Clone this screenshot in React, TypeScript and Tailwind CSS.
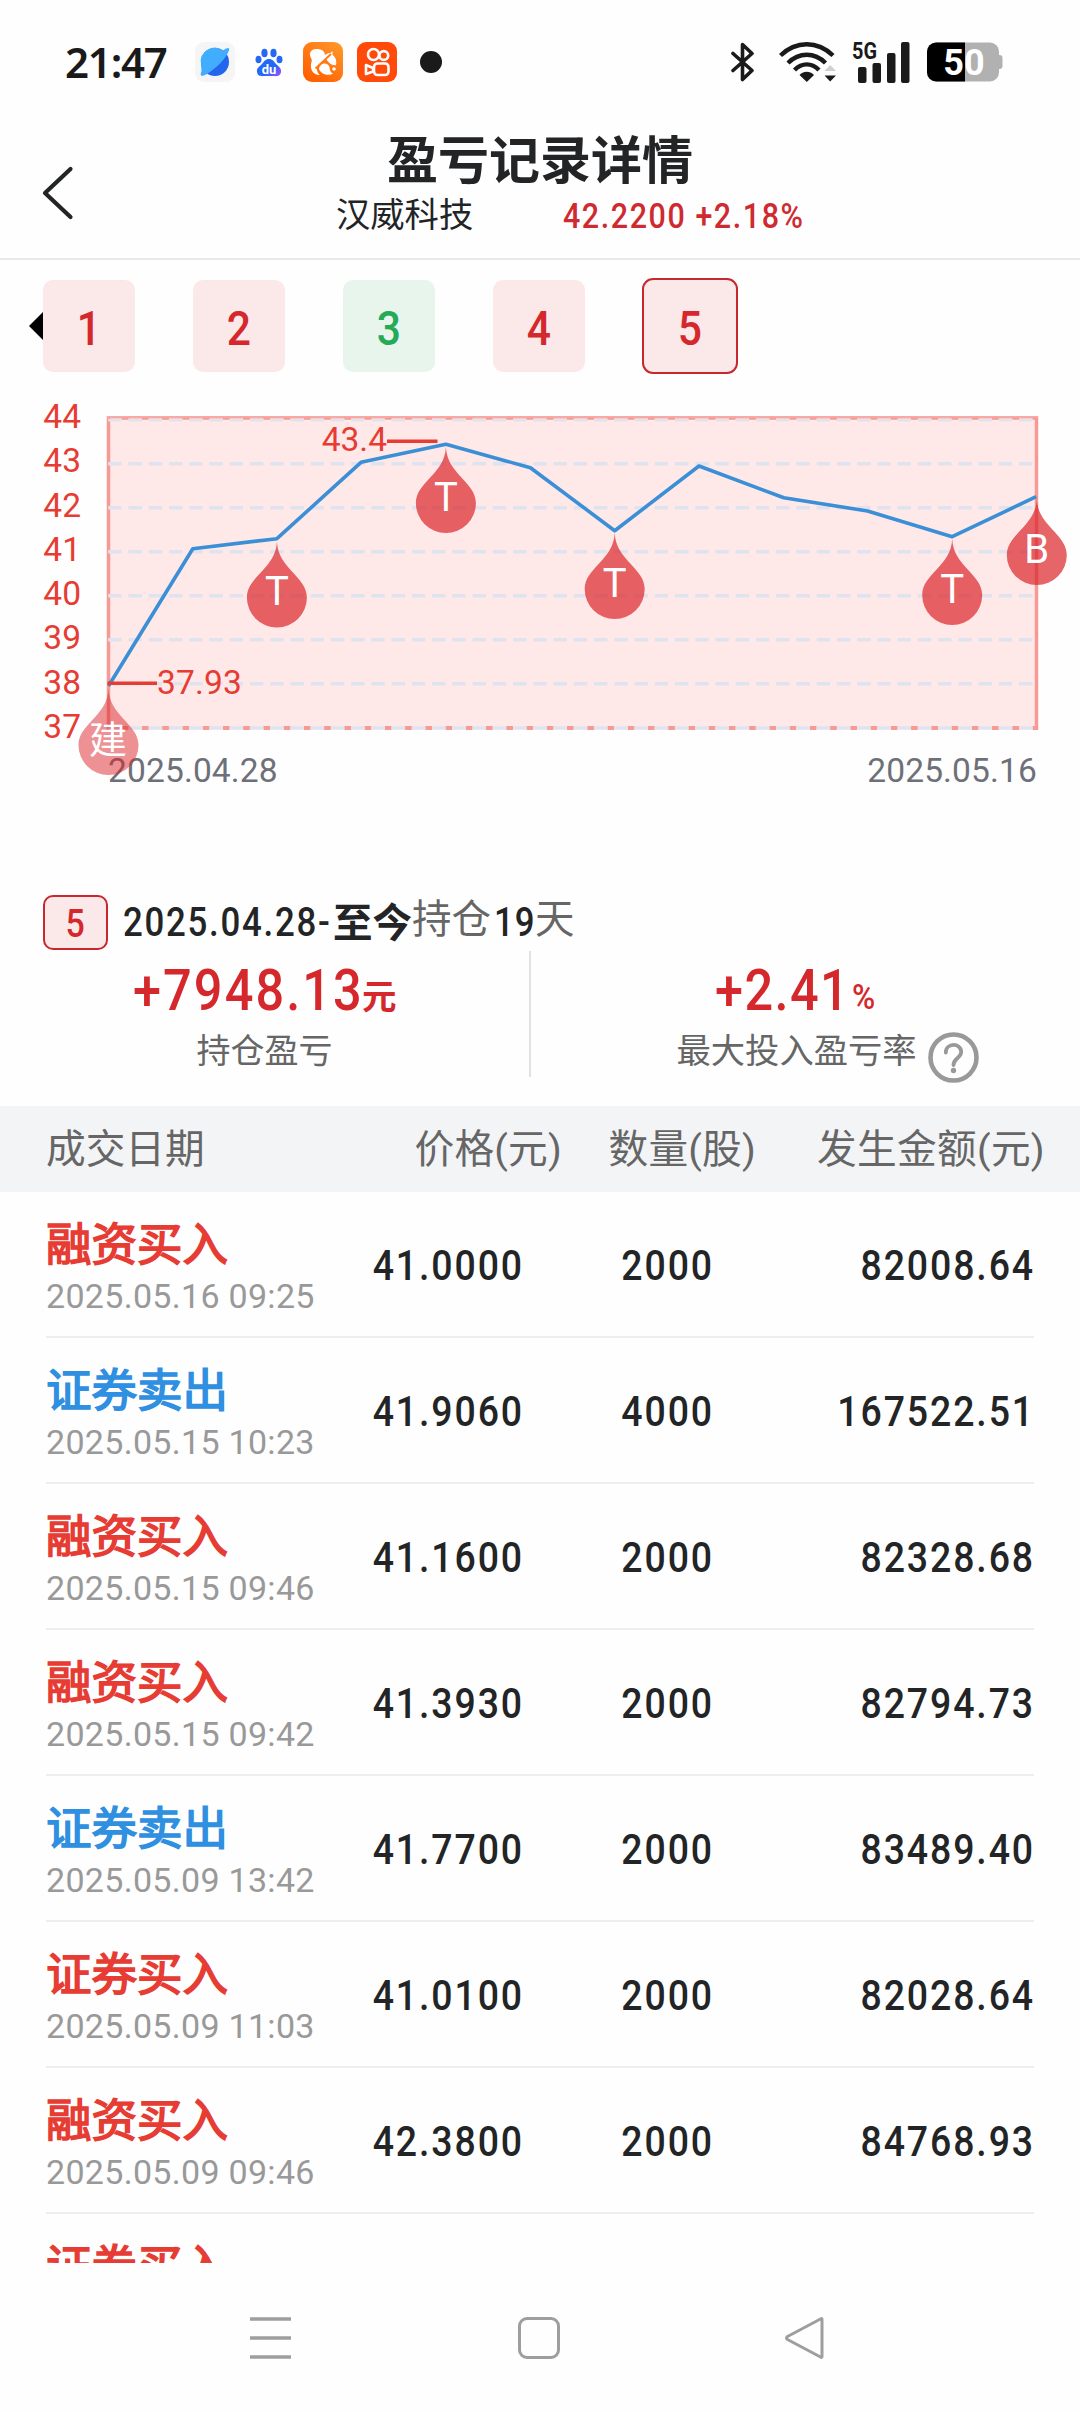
import React from "react";

type Trade = {
  kind: "buy" | "sell";
  name: string;
  time?: string;
  price?: string;
  qty?: string;
  amount?: string;
};

const trades: Trade[] = [
  { kind: "buy", name: "融资买入", time: "2025.05.16 09:25", price: "41.0000", qty: "2000", amount: "82008.64" },
  { kind: "sell", name: "证券卖出", time: "2025.05.15 10:23", price: "41.9060", qty: "4000", amount: "167522.51" },
  { kind: "buy", name: "融资买入", time: "2025.05.15 09:46", price: "41.1600", qty: "2000", amount: "82328.68" },
  { kind: "buy", name: "融资买入", time: "2025.05.15 09:42", price: "41.3930", qty: "2000", amount: "82794.73" },
  { kind: "sell", name: "证券卖出", time: "2025.05.09 13:42", price: "41.7700", qty: "2000", amount: "83489.40" },
  { kind: "buy", name: "证券买入", time: "2025.05.09 11:03", price: "41.0100", qty: "2000", amount: "82028.64" },
  { kind: "buy", name: "融资买入", time: "2025.05.09 09:46", price: "42.3800", qty: "2000", amount: "84768.93" },
  { kind: "buy", name: "证券买入" },
];

function StatusBar() {
  return (
    <div className="flex h-[124px] items-center pl-[65px]">
      <div className="w-[130px] font-['Noto_Sans'] text-[42px] leading-[50px] font-semibold tracking-[-1.2px] text-[#1a1a1a]">
        21:47
      </div>
      <svg className="h-[40px] w-[40px]" viewBox="0 0 40 40">
        <defs>
          <linearGradient id="planet" x1="0" y1="0" x2="1" y2="1">
            <stop offset="0" stopColor="#3cb0ff" />
            <stop offset="1" stopColor="#4aa8ff" />
          </linearGradient>
        </defs>
        <rect width="40" height="40" rx="9" fill="#f5f5f6" />
        <circle cx="20" cy="20" r="14" fill="#2266ee" />
        <path d="M6 22A14 14 0 0 1 28 8.400C33 5 35 5.500 34 8.500C31 16 22 26 11 32.500C6 35 4.500 34 6.500 29Z" fill="url(#planet)" />
      </svg>
      <svg className="ml-[20px] h-[29px] w-[28px]" viewBox="0 0 28 29">
        <defs>
          <linearGradient id="paw" x1="0" y1="0" x2="1" y2="1">
            <stop offset="0.600" stopColor="#2468f5" />
            <stop offset="1" stopColor="#a552ff" />
          </linearGradient>
        </defs>
        <ellipse cx="3.500" cy="11.500" rx="3" ry="3.800" fill="#2468f5" />
        <ellipse cx="9.500" cy="5" rx="3.100" ry="4.300" fill="#2468f5" />
        <ellipse cx="18.500" cy="5" rx="3.100" ry="4.300" fill="#2468f5" />
        <ellipse cx="24.500" cy="11.500" rx="3" ry="3.800" fill="#2468f5" />
        <path d="M14 11C17.500 11 19 13.500 21 16C24 19 26.500 20 26 24C25.500 28 22 28.500 19 28H9C6 28.500 2.500 28 2 24C1.500 20 4 19 7 16C9 13.500 10.500 11 14 11Z" fill="url(#paw)" />
        <text x="14" y="26" textAnchor="middle" className="fill-white font-['Roboto'] text-[13px] font-bold">
          du
        </text>
      </svg>
      <svg className="ml-[20px] h-[40px] w-[40px]" viewBox="0 0 40 40">
        <defs>
          <linearGradient id="squirrel" x1="1" y1="0" x2="0.300" y2="1">
            <stop offset="0" stopColor="#ff9a2e" />
            <stop offset="1" stopColor="#ff6000" />
          </linearGradient>
        </defs>
        <rect width="40" height="40" rx="9" fill="url(#squirrel)" />
        <path
          d="M17 33C9 33 6.500 26 8.500 20C9.500 17 7.500 16 7 13.500C6.500 9 10 6.500 14 7C18.500 7 21.500 9 22 13C23 12 26 10.500 27.500 11L29.500 9V13C32.500 15 34 19 33 23C29 24 26 21 23 17L14 25C13.500 28.500 14.500 31 17 33Z"
          fill="#fff"
        />
        <path d="M16 27C17 20 25 20 26.500 25C27 28 27 30 30 31.500C27 34 18 33 16 27Z" fill="#fff" />
        <path d="M12.500 26.500L28 12" stroke="#ff7a14" strokeWidth="1.800" />
        <circle cx="31" cy="27" r="1.800" fill="#fff" />
      </svg>
      <svg className="ml-[14px] h-[40px] w-[40px]" viewBox="0 0 40 40">
        <rect width="40" height="40" rx="9" fill="#ff4a0a" />
        <g fill="none" stroke="#fff" strokeWidth="2.600" strokeLinejoin="round">
          <circle cx="16.500" cy="12.500" r="5.500" />
          <circle cx="26.800" cy="13.500" r="4.400" />
          <rect x="17" y="21.500" width="14.500" height="11.500" rx="3.500" />
          <path d="M9 23L16 26V29.500L9 32Z" />
        </g>
      </svg>
      <div className="ml-[23px] h-[22px] w-[22px] rounded-full bg-[#1a1a1a]" />

      <svg className="ml-[289px] h-[40px] w-[23px]" viewBox="0 0 23 40">
        <path d="M2 11.500L21 28.500L11.500 37.500V2.500L21 11.500L2 28.500" fill="none" stroke="#1a1a1a" strokeWidth="3.600" strokeLinejoin="round" strokeLinecap="round" />
      </svg>
      <svg className="ml-[25px] h-[40px] w-[57px]" viewBox="0 0 57 40">
        <g fill="none" stroke="#1a1a1a" strokeWidth="4.400">
          <path d="M1.500 13.500C17 -1.500 38.500 -1.500 54 13.500" />
          <path d="M9 21C20 10 35.500 10 46.500 21" />
          <path d="M15.500 28C23 20.500 32.500 20.500 40 28" />
        </g>
        <path d="M20.500 33C25 28.700 30.500 28.700 35 33L27.800 40Z" fill="#1a1a1a" />
        <path d="M45.500 29L51.200 23L57 29Z" fill="#cfcfcf" />
        <path d="M45.500 33.500L51.200 39.500L57 33.500Z" fill="#1a1a1a" />
      </svg>
      <svg className="ml-[16px] h-[42px] w-[58px] overflow-visible" viewBox="0 0 58 42">
        <text x="0" y="18" textLength="25" lengthAdjust="spacingAndGlyphs" className="fill-[#1a1a1a] font-['Roboto'] text-[24px] font-bold">
          5G
        </text>
        <g fill="#1a1a1a">
          <rect x="6" y="26" width="8.500" height="16" rx="2" />
          <rect x="20.500" y="22" width="8.500" height="20" rx="2" />
          <rect x="35" y="12" width="8.500" height="30" rx="2" />
          <rect x="49" y="1" width="8.500" height="41" rx="2" />
        </g>
      </svg>
      <svg className="ml-[17px] h-[40px] w-[76px]" viewBox="0 0 76 40">
        <defs>
          <clipPath id="cell">
            <rect width="72" height="39" y="0.500" rx="9" />
          </clipPath>
        </defs>
        <rect x="68" y="13" width="7.500" height="14" rx="3" fill="#b1b1b1" />
        <g clipPath="url(#cell)">
          <rect width="76" height="40" fill="#b1b1b1" />
          <rect width="38" height="40" fill="#000" />
        </g>
        <text x="37" y="32.500" textAnchor="middle" className="fill-white font-['Roboto'] text-[36px] font-bold">
          50
        </text>
      </svg>
    </div>
  );
}

function Header() {
  return (
    <header className="relative h-[136px] border-b-2 border-[#e9e9e9] pt-[8px] text-[#222426]">
      <svg className="absolute top-[42px] left-[41px] h-[54px] w-[34px]" viewBox="0 0 34 54">
        <path d="M29.500 3L4 27L29.500 51" fill="none" stroke="#222426" strokeWidth="4.200" strokeLinecap="round" strokeLinejoin="round" />
      </svg>
      <h1 className="text-center text-[51px] leading-[59px] font-bold">盈亏记录详情</h1>
      <div className="mt-[4px] flex pl-[336px]">
        <div className="w-[227px] text-[34.300px] leading-[40px]">汉威科技</div>
        <div className="mt-[2px] origin-left scale-x-[0.87] text-[35px] leading-[40px] font-medium tracking-[1.800px] whitespace-pre text-[#cf2a30]">
          42.2200 +2.18%
        </div>
      </div>
    </header>
  );
}

const tile = "flex h-[92px] w-[92px] items-center justify-center rounded-[10px] pt-[4px] text-[49px] leading-none font-medium";
const slim = "inline-block scale-x-[0.87]";

function Tabs() {
  return (
    <div className="flex h-[132px] pt-[20px]">
      <svg className="mt-[32px] ml-[29px] h-[28px] w-[14px]" viewBox="0 0 14 28">
        <path d="M0 14L14 0V28Z" fill="#000" />
      </svg>
      <div className="flex gap-[58px]">
        <div className={`${tile} bg-[#fbe8e9] text-[#d4282d]`}><span className={slim}>1</span></div>
        <div className={`${tile} bg-[#fbe8e9] text-[#d4282d]`}><span className={slim}>2</span></div>
        <div className={`${tile} bg-[#e8f5ed] text-[#25ab58]`}><span className={slim}>3</span></div>
        <div className={`${tile} bg-[#fbe8e9] text-[#d4282d]`}><span className={slim}>4</span></div>
        <div className="-mt-[2px] -ml-px flex h-[96px] w-[96px] items-center justify-center rounded-[11px] border-2 border-[#c7282f] bg-[#fbe8e9] pt-[4px] text-[49px] leading-none font-medium text-[#d4282d]">
          <span className={slim}>5</span>
        </div>
      </div>
    </div>
  );
}

function Pin({ x, y, label, faded, size = 40 }: { x: number; y: number; label: string; faded?: boolean; size?: number }) {
  return (
    <g transform={`translate(${x} ${y})`}>
      <path
        d="M0 0C1 27 30 35 30 56A30 30 0 0 1 -30 56C-30 35 -1 27 0 0Z"
        fill="#db242a"
        fillOpacity={faded ? 0.5 : 0.7}
      />
      <text x={faded ? -0.5 : 0} y={faded ? 64 : 63.5} textAnchor="middle" fontSize={size} fill="#fff">
        {label}
      </text>
    </g>
  );
}

const levels = [44, 43, 42, 41, 40, 39, 38, 37];
const line =
  "108.500,686 192.800,548.700 276.900,538.700 361,462.300 445.900,444.300 530.400,467.700 614.700,530.700 699,466 783.800,497.700 867.500,511 952.200,536.700 1036.200,496.700";

function Chart() {
  return (
    <svg className="block h-[480px] w-[1080px]" viewBox="0 392 1080 480">
      <rect x="108.500" y="417" width="928" height="311" fill="#ffe9e8" />
      <g fill="none" stroke="#f59a94">
        <path d="M108.500 416V730M1036.500 416V730" strokeWidth="3.500" />
        <path d="M107 417.300H1038" strokeWidth="2.500" stroke="#f8a9a4" />
        <path d="M121.700 418.700H1038" strokeWidth="2" strokeDasharray="6.740 13.500" />
        <path d="M121.700 728H1038" strokeWidth="4" strokeDasharray="6.740 13.500" />
      </g>
      <g stroke="#dfe3f0" strokeDasharray="13.500 6.740">
        {[420.3, 463.7, 507.7, 551.7, 595.7, 639.7, 683.7, 728].map((y, i) => (
          <path key={y} d={`M108.200 ${y}H1034`} strokeWidth={i === 0 ? 2.5 : 3.5} />
        ))}
      </g>
      <g className="fill-[#e63c33]" fontSize="33.500">
        {levels.map((v, i) => (
          <text key={v} x="81" y={428 + i * 44.25} textAnchor="end">
            {v}
          </text>
        ))}
        <text x="387" y="451" textAnchor="end">43.4</text>
        <text x="157" y="693.800" letterSpacing="0.200">37.93</text>
      </g>
      <g fontSize="33.500" fill="#6e7079" letterSpacing="0.150">
        <text x="108" y="782">2025.04.28</text>
        <text x="1037" y="782" textAnchor="end">2025.05.16</text>
      </g>
      <polyline points={line} fill="none" stroke="#3b8fd6" strokeWidth="3.600" strokeLinejoin="round" />
      <path d="M387 441.300H437.500M107.500 683.300H157" stroke="#e63c33" strokeWidth="3.600" />
      <Pin x={108.5} y={689} label="建" faded size={38} />
      <Pin x={276.9} y={541.5} label="T" />
      <Pin x={445.9} y={447} label="T" />
      <Pin x={614.7} y={533} label="T" />
      <Pin x={952.2} y={539} label="T" />
      <Pin x={1036.8} y={499} label="B" />
    </svg>
  );
}

function Summary() {
  return (
    <section className="h-[234px] pt-[22px] text-[#222426]">
      <div className="flex h-[57px] pl-[43px] text-[40px] leading-[56px]">
        <div className="mt-px flex h-[55px] w-[65px] items-center justify-center rounded-[10px] border-2 border-[#c7282f] bg-[#fbe8e9] pt-[3px] text-[39px] leading-none font-medium text-[#d4282d]">
          <span className={slim}>5</span>
        </div>
        <div className="mt-px ml-[15px] w-[210px] font-medium">
          <span className="inline-block origin-left scale-x-[0.87] tracking-[2px] whitespace-nowrap">2025.04.28-</span>
        </div>
        <div className="mt-[2px] text-[39.500px] font-bold">至今</div>
        <div className="-mt-[2px] text-[39.500px] text-[#666]">持仓</div>
        <div className="mt-px ml-[3px] w-[41px] font-medium">
          <span className="inline-block origin-left scale-x-[0.87] tracking-[1px]">19</span>
        </div>
        <div className="-mt-[2px] text-[39.500px] text-[#666]">天</div>
      </div>
      <div className="flex">
        <div className="w-[529px] pt-[4px]">
          <div className="flex h-[70px] pl-[133px] text-[58px] leading-[70px] font-medium text-[#d4282d]">
            <div className="w-[229px]">
              <span className="inline-block origin-left scale-x-[0.87] tracking-[2.400px] whitespace-nowrap">+7948.13</span>
            </div>
            <div className="pt-[7px] text-[34.500px] font-bold">元</div>
          </div>
          <div className="mt-[6px] text-center text-[34px] leading-[40px] text-[#666]">持仓盈亏</div>
        </div>
        <div className="h-[126px] w-[2px] bg-[#e2e2e2]" />
        <div className="w-[531px] pt-[4px]">
          <div className="flex h-[70px] pl-[184px] text-[58px] leading-[70px] font-medium text-[#d4282d]">
            <div className="w-[137px]">
              <span className="inline-block origin-left scale-x-[0.87] tracking-[1.600px] whitespace-nowrap">+2.41</span>
            </div>
            <div className="origin-left scale-x-[0.9] pt-[8px] text-[35px]">%</div>
          </div>
          <div className="relative mx-auto mt-[6px] w-[240px] text-[34.300px] leading-[40px] whitespace-nowrap text-[#666]">
            最大投入盈亏率
            <svg className="absolute top-px left-[251px] h-[51px] w-[51px]" viewBox="0 0 51 51">
              <circle cx="25.500" cy="25.500" r="23" fill="none" stroke="#999" strokeWidth="4.600" />
              <path d="M17.800 20.500C17.800 10.500 33.200 10.500 33.200 20C33.200 26 25.500 26 25.500 33" fill="none" stroke="#999" strokeWidth="3.800" strokeLinecap="round" />
              <circle cx="25.500" cy="38.500" r="2.700" fill="#999" />
            </svg>
          </div>
        </div>
      </div>
    </section>
  );
}

const figure = "origin-right scale-x-[0.87]";

function TradeTable() {
  return (
    <section>
      <div className="grid h-[86px] grid-cols-[370px_192px_194px_289px] bg-[#f3f4f6] pt-[16px] text-right text-[39.700px] leading-[56px] text-[#666]">
        <div className="pl-[46px] text-left">成交日期</div>
        <div className="tracking-[0.200px]">价格(元)</div>
        <div className="tracking-[0.200px]">数量(股)</div>
        <div className="tracking-[0.300px]">发生金额(元)</div>
      </div>
      <div className="h-[1071px] overflow-hidden">
        {trades.map((t, i) => (
          <div
            key={i}
            className="mx-[46px] grid h-[146px] grid-cols-[290px_188px_190px_321px] border-b-2 border-[#eeeeef] text-right text-[43px] leading-[146px] font-medium tracking-[2.200px] text-[#222426]"
          >
            <div className="pt-[29px] text-left tracking-normal">
              <div
                className={`text-[45.500px] leading-[50px] font-normal [-webkit-text-stroke:1.6px_currentColor] ${
                  t.kind === "buy" ? "text-[#e63c33]" : "text-[#2f8fe0]"
                }`}
              >
                {t.name}
              </div>
              <div className="mt-[5px] text-[34px] leading-[40px] font-normal tracking-[0.300px] whitespace-nowrap text-[#999]">{t.time}</div>
            </div>
            <div className={figure}>{t.price}</div>
            <div className={figure}>{t.qty}</div>
            <div className={figure}>{t.amount}</div>
          </div>
        ))}
      </div>
    </section>
  );
}

function NavBar() {
  return (
    <nav className="flex h-[149px] items-center pl-[250px]">
      <svg className="h-[42px] w-[41px]" viewBox="0 0 41 42">
        <path d="M0 2H41M0 21H41M0 40H41" stroke="#9e9e9e" strokeWidth="3.400" />
      </svg>
      <div className="ml-[227px] h-[42px] w-[42px] rounded-[9px] border-3 border-[#9e9e9e]" />
      <svg className="ml-[224px] h-[42px] w-[40px]" viewBox="0 0 40 42">
        <path d="M38 2.500V39.500Q38 41 36.500 40L3.500 22.500Q1.500 21 3.500 19.500L36.500 2Q38 1 38 2.500Z" fill="none" stroke="#9e9e9e" strokeWidth="3" strokeLinejoin="round" />
      </svg>
    </nav>
  );
}

export default function App() {
  return (
    <main className="h-[2412px] w-[1080px] overflow-hidden bg-[#fefefe] font-['Roboto','Noto_Sans_CJK_SC',sans-serif]">
      <StatusBar />
      <Header />
      <Tabs />
      <Chart />
      <Summary />
      <TradeTable />
      <NavBar />
    </main>
  );
}
